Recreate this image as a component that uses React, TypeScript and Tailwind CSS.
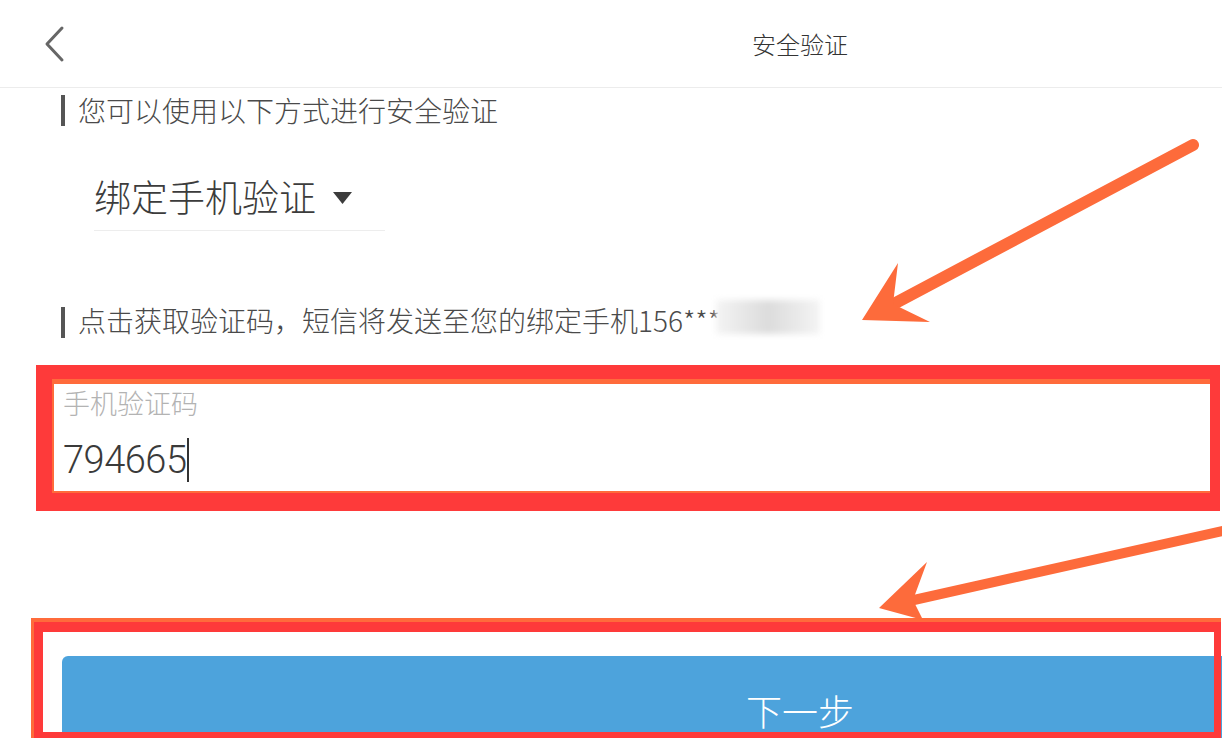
const cjk = "font-['Noto_Sans_CJK_SC','Noto_Sans',sans-serif]";

function SectionLabel({ children }: { children: React.ReactNode }) {
  return (
    <div className="flex h-[32px] items-center pl-[61px]">
      <span className="mr-[13px] h-[31px] w-[4px] bg-[#555]" />
      <span className="text-[28px] font-light leading-none text-[#4a4a4a]">{children}</span>
    </div>
  );
}

function Annotations() {
  return (
    <>
      {/* red highlight round the code field */}
      <div className="pointer-events-none absolute left-[36px] top-[365px] h-[146px] w-[1184px] border-t-[14px] border-r-[10px] border-b-[18px] border-l-[16px] border-[#fe3a3a]">
        <div className="h-full w-full border-t-[5px] border-l-2 border-b-2 border-[#ff6b3b]" />
      </div>

      {/* red highlight round the button */}
      <div className="pointer-events-none absolute left-[31px] top-[618px] h-[120px] w-[1190px] border-t-[4px] border-l-[3px] border-[#ff6b3b]">
        <div className="h-full w-full border-t-[10px] border-r-[7px] border-b-[6px] border-l-[9px] border-[#fe3a3a]" />
      </div>

      <svg
        className="pointer-events-none absolute inset-0"
        width="1222"
        height="738"
        viewBox="0 0 1222 738"
      >
        <line x1="1193" y1="145" x2="888" y2="307" stroke="#fd6b3b" strokeWidth="12" strokeLinecap="round" />
        <polygon points="862,320 898,263 893,304 930,322" fill="#fd6b3b" />

        <line x1="1240" y1="527" x2="905" y2="602" stroke="#fd6b3b" strokeWidth="10" strokeLinecap="round" />
        <polygon points="879,608 927,562 913,600 923,620" fill="#fd6b3b" />
      </svg>
    </>
  );
}

export default function App() {
  return (
    <div className={`relative h-[738px] w-[1222px] overflow-hidden bg-white ${cjk}`}>
      <div className="w-[1600px]">
        <header className="relative flex h-[88px] items-center justify-center border-b border-[#ececec]">
          <svg className="absolute left-[40px] top-[24px]" width="30" height="40" viewBox="0 0 30 40">
            <polyline
              points="22,4 7,20 22,36"
              fill="none"
              stroke="#666"
              strokeWidth="3"
              strokeLinecap="round"
              strokeLinejoin="round"
            />
          </svg>
          <h1 className="text-[24px] font-light leading-none text-[#333]">安全验证</h1>
        </header>

        <div className="mt-[6px]">
          <SectionLabel>您可以使用以下方式进行安全验证</SectionLabel>
        </div>

        <div className="ml-[94px] mt-[48px] w-[291px] border-b border-[#ededed] pb-[12px]">
          <div className="flex h-[44px] items-center">
            <span className="text-[37px] font-light leading-none text-[#3c3c3c]">绑定手机验证</span>
            <svg className="ml-[17px] mt-[4px]" width="19" height="12" viewBox="0 0 19 12">
              <polygon points="0,0 19,0 9.5,12" fill="#3c3c3c" />
            </svg>
          </div>
        </div>

        <div className="mt-[75px]">
          <SectionLabel>
            点击获取验证码，短信将发送至您的绑定手机156***
            <span className="relative inline-block align-middle">
              <span className="text-[#bbb]">*</span>
              <span className="absolute -top-[10px] left-[-4px] h-[34px] w-[104px] bg-gradient-to-r from-[#f4f4f4] via-[#dcdcdc] to-[#f4f4f4] blur-[3px]" />
            </span>
          </SectionLabel>
        </div>

        <div className="mt-[39px] h-[114px] pl-[63px]">
          <div className="pt-[10px]">
            <div className="flex h-[30px] items-center text-[27px] font-light leading-none text-[#b3b3b3]">
              手机验证码
            </div>
          </div>
          <div className="mt-[20px] flex h-[46px] items-center">
            <span className="font-['Roboto','Noto_Sans',sans-serif] text-[38px] font-light leading-none tracking-[-0.5px] text-[#3a3a3a]">
              794665
            </span>
            <span className="ml-[1px] h-[44px] w-[2px] bg-[#333]" />
          </div>
        </div>

        <div className="ml-[62px] mt-[165px] flex h-[108px] w-[1476px] items-center justify-center rounded-[6px] bg-[#4da3dc]">
          <span className="text-[36px] font-light leading-none text-white">下一步</span>
        </div>
      </div>

      <Annotations />
    </div>
  );
}
